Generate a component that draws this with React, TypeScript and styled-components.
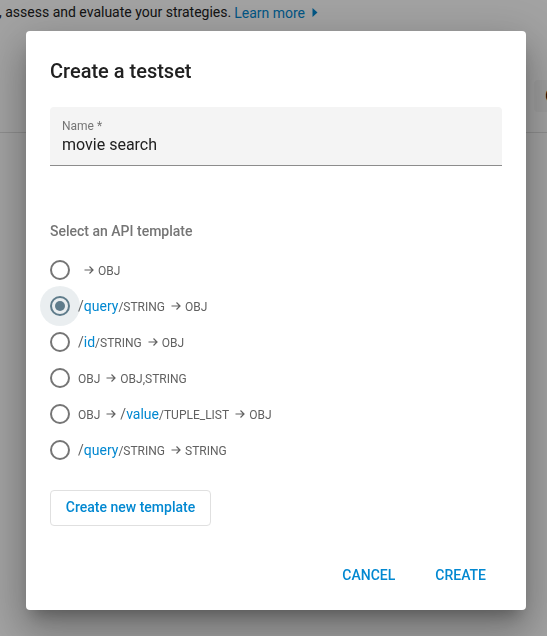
import React from 'react';
import styled, { createGlobalStyle } from 'styled-components';

const GlobalStyle = createGlobalStyle`
  html, body {
    margin: 0;
    padding: 0;
    height: 100%;
    overflow: hidden;
    background: #fff;
    font-family: Roboto, "Liberation Sans", sans-serif;
  }
`;

const BehindPage = styled.div`
  width: 547px;
  height: 636px;
  overflow: hidden;
`;

const Intro = styled.div`
  height: 25px;
  display: flex;
  justify-content: flex-end;
  padding-right: 229px;
  font-size: 14px;
  line-height: 24px;
  color: #212121;
  white-space: nowrap;
`;

const LearnMore = styled.a`
  color: #0288d1;
  margin-left: 3px;
  display: inline-flex;
  align-items: center;
  gap: 7px;
`;

const Toolbar = styled.div`
  height: 108px;
  border-bottom: 1px solid #e0e0e0;
  display: flex;
  justify-content: flex-end;
  padding-top: 55px;
  box-sizing: border-box;
`;

const ToolbarChip = styled.div`
  width: 13px;
  height: 32px;
  background: #f7f7f7;
  border-radius: 4px 0 0 4px;
  overflow: hidden;
  font-size: 18px;
  line-height: 32px;
  padding-left: 11px;
  box-sizing: border-box;
  color: #000;
`;

const Backdrop = styled.div`
  position: fixed;
  inset: 0;
  background: rgba(0, 0, 0, 0.36);
`;

const Dialog = styled.div`
  position: absolute;
  left: 26px;
  top: 31px;
  width: 500px;
  height: 579px;
  box-sizing: border-box;
  padding: 24px;
  background: #fff;
  border-radius: 4px;
  box-shadow: 0 11px 15px -7px rgba(0, 0, 0, 0.28), 0 24px 38px 3px rgba(0, 0, 0, 0.18),
    0 9px 46px 8px rgba(0, 0, 0, 0.14);
  display: flex;
  flex-direction: column;
`;

const Title = styled.h2`
  margin: 0 0 20px;
  font-size: 20px;
  font-weight: 500;
  line-height: 32px;
  color: #212121;
`;

const NameField = styled.div`
  width: 452px;
  height: 59px;
  box-sizing: border-box;
  padding: 12px 12px 0;
  background: #f4f4f4;
  border-radius: 4px 4px 0 0;
  border-bottom: 1px solid #8c8c8c;
`;

const NameLabel = styled.div`
  font-size: 12px;
  line-height: 14px;
  color: #757575;
`;

const NameValue = styled.div`
  margin-top: 1px;
  font-size: 16px;
  line-height: 22px;
  color: #212121;
`;

const SectionLabel = styled.div`
  margin: 56px 0 12px;
  font-size: 14px;
  font-weight: 500;
  line-height: 18px;
  color: #757575;
`;

const TemplateList = styled.div`
  display: flex;
  flex-direction: column;
`;

const TemplateRow = styled.label`
  height: 36px;
  display: flex;
  align-items: center;
  gap: 8px;
  font-size: 12px;
  color: #616161;
`;

const RadioWrap = styled.span<{ $checked: boolean }>`
  position: relative;
  width: 20px;
  height: 20px;
  flex: none;
  box-sizing: border-box;
  border-radius: 50%;
  border: 2px solid ${p => (p.$checked ? '#607d8b' : '#757575')};
  display: flex;
  align-items: center;
  justify-content: center;

  &::before {
    content: '';
    display: ${p => (p.$checked ? 'block' : 'none')};
    position: absolute;
    left: -12px;
    top: -12px;
    width: 40px;
    height: 40px;
    border-radius: 50%;
    background: rgba(96, 125, 139, 0.13);
  }

  &::after {
    content: '';
    display: ${p => (p.$checked ? 'block' : 'none')};
    width: 10px;
    height: 10px;
    border-radius: 50%;
    background: #607d8b;
  }
`;

const Signature = styled.span`
  display: inline-flex;
  align-items: baseline;
  white-space: nowrap;

  /* keeps the baseline the same in rows that have no 14px part */
  &::before {
    content: '\\200b';
    font-size: 14px;
  }
`;

const PathPart = styled.span`
  font-size: 14px;
  color: #616161;
`;

const PathParam = styled.span`
  font-size: 14px;
  color: #0288d1;
`;

const ArrowGap = styled.span`
  display: inline-flex;
  align-self: center;
  margin: 0 4px 0 6px;
`;

const NewTemplateButton = styled.button`
  align-self: flex-start;
  margin-top: 22px;
  width: 161px;
  height: 36px;
  padding: 0 0 2px;
  background: #fff;
  border: 1px solid #e0e0e0;
  border-radius: 4px;
  font-family: inherit;
  font-size: 14px;
  font-weight: 500;
  color: #0288d1;
`;

const Actions = styled.div`
  margin-top: auto;
  display: flex;
  justify-content: flex-end;
  gap: 40px;
  padding-right: 16px;
  padding-bottom: 1px;
`;

const ActionButton = styled.button`
  background: none;
  border: none;
  padding: 0;
  height: 20px;
  font-family: inherit;
  font-size: 14px;
  font-weight: 500;
  color: #0288d1;
`;

const Arrow = () => (
  <svg width="10" height="10" viewBox="0 0 10 10" fill="none" stroke="#616161" strokeWidth="1.2">
    <path d="M0.5 5H9M5.5 1.5L9 5L5.5 8.5" />
  </svg>
);

const Caret = () => (
  <svg width="6" height="9" viewBox="0 0 6 9" fill="#0288d1">
    <path d="M0.5 0L5.5 4.5L0.5 9Z" />
  </svg>
);

type Part = { t: 'text' | 'param' | 'arrow'; v?: string };

const templates: Part[][] = [
  [{ t: 'arrow' }, { t: 'text', v: 'OBJ' }],
  [
    { t: 'text', v: '/' },
    { t: 'param', v: 'query' },
    { t: 'text', v: '/STRING' },
    { t: 'arrow' },
    { t: 'text', v: 'OBJ' },
  ],
  [
    { t: 'text', v: '/' },
    { t: 'param', v: 'id' },
    { t: 'text', v: '/STRING' },
    { t: 'arrow' },
    { t: 'text', v: 'OBJ' },
  ],
  [{ t: 'text', v: 'OBJ' }, { t: 'arrow' }, { t: 'text', v: 'OBJ,STRING' }],
  [
    { t: 'text', v: 'OBJ' },
    { t: 'arrow' },
    { t: 'text', v: '/' },
    { t: 'param', v: 'value' },
    { t: 'text', v: '/TUPLE_LIST' },
    { t: 'arrow' },
    { t: 'text', v: 'OBJ' },
  ],
  [
    { t: 'text', v: '/' },
    { t: 'param', v: 'query' },
    { t: 'text', v: '/STRING' },
    { t: 'arrow' },
    { t: 'text', v: 'STRING' },
  ],
];

const renderPart = (part: Part, i: number) => {
  if (part.t === 'arrow') {
    return (
      <ArrowGap key={i}>
        <Arrow />
      </ArrowGap>
    );
  }
  if (part.t === 'param') return <PathParam key={i}>{part.v}</PathParam>;
  if (part.v === '/') return <PathPart key={i}>/</PathPart>;
  return <span key={i}>{part.v}</span>;
};

export default function App() {
  return (
    <>
      <GlobalStyle />
      <BehindPage>
        <Intro>
          <span>, assess and evaluate your strategies.</span>
          <LearnMore>
            Learn more <Caret />
          </LearnMore>
        </Intro>
        <Toolbar>
          <ToolbarChip>C</ToolbarChip>
        </Toolbar>
      </BehindPage>
      <Backdrop />
      <Dialog>
        <Title>Create a testset</Title>
        <NameField>
          <NameLabel>Name *</NameLabel>
          <NameValue>movie search</NameValue>
        </NameField>
        <SectionLabel>Select an API template</SectionLabel>
        <TemplateList>
          {templates.map((parts, i) => (
            <TemplateRow key={i}>
              <RadioWrap $checked={i === 1} />
              <Signature>{parts.map(renderPart)}</Signature>
            </TemplateRow>
          ))}
        </TemplateList>
        <NewTemplateButton>Create new template</NewTemplateButton>
        <Actions>
          <ActionButton>CANCEL</ActionButton>
          <ActionButton>CREATE</ActionButton>
        </Actions>
      </Dialog>
    </>
  );
}
